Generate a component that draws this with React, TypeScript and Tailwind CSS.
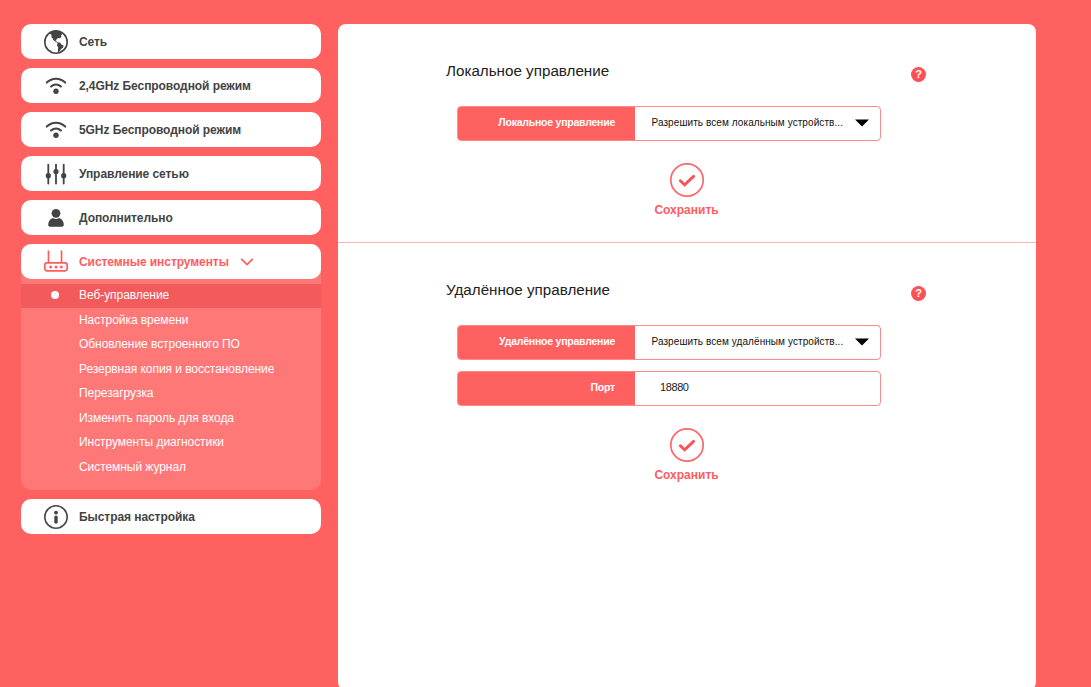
import type { ReactNode } from "react";

function GlobeIcon() {
  return (
    <svg width="26" height="26" viewBox="0 0 26 26" fill="none">
      <circle cx="13" cy="13" r="11.2" stroke="#434343" strokeWidth="1.6" />
      <path
        fill="#434343"
        d="M7.600 2.600 12 1.400l6.600 1.600.4 2.700-1.300 1 .8.9-1.500 1.700-1.900-.2-1.600 1.100-.5 1.500-2.400-.5-.8-1.700-1.300-1.300L8.400 5.700 6.600 4.400z"
      />
      <path d="m10.200 9.800 1.700 2.200 2.800 1.500" stroke="#434343" strokeWidth=".9" />
      <path fill="#434343" d="m14.800 13.200 2.500.5 1.300 2 2.100.9-.8 2.200-1.800 1.100-1.200 2.200-2 1.800.1-4.100.2-1.600-1.300-1.700z" />
    </svg>
  );
}

function WifiIcon() {
  return (
    <svg width="26" height="26" viewBox="0 0 26 26" fill="none" stroke="#434343" strokeWidth="2.1" strokeLinecap="round">
      <path d="M3.800 9.600C9.200 4.500 16.800 4.500 22.200 9.600" />
      <path d="M8.100 13.500c2.900-2.600 6.900-2.600 9.800 0" />
      <circle cx="13" cy="18.300" r="2.700" fill="#434343" stroke="none" />
    </svg>
  );
}

function SlidersIcon() {
  return (
    <svg width="26" height="26" viewBox="0 0 26 26" fill="none" stroke="#434343" strokeWidth="1.8" strokeLinecap="round">
      <path d="M5.300 3.600v19M13 3.600v19M20.700 3.600v19" />
      <g fill="#434343" stroke="none">
        <circle cx="5.300" cy="14.700" r="2.600" />
        <circle cx="13" cy="10.600" r="2.600" />
        <circle cx="20.700" cy="14.700" r="2.600" />
      </g>
    </svg>
  );
}

function UserIcon() {
  return (
    <svg width="26" height="26" viewBox="0 0 26 26" fill="#434343">
      <circle cx="13" cy="8.300" r="4.400" />
      <path d="M5.200 20c0-3.900 2.200-6.200 4.900-6.900 1.800 1.200 4 1.200 5.800 0 2.700.7 4.900 3 4.900 6.900 0 1.200-.9 1.700-2 1.700H7.200c-1.100 0-2-.5-2-1.700z" />
    </svg>
  );
}

function RouterIcon() {
  return (
    <svg width="26" height="26" viewBox="0 0 26 26" fill="none" stroke="#ff5c5e" strokeWidth="1.700">
      <path d="M5.500 1.500v12M18.500 1.500v12" />
      <rect x="1.800" y="13.800" width="22.400" height="8" rx="2.200" />
      <g fill="#ff5c5e" stroke="none">
        <circle cx="7.700" cy="17.900" r="1.500" />
        <circle cx="13" cy="17.900" r="1.500" />
        <circle cx="18.300" cy="17.900" r="1.500" />
      </g>
    </svg>
  );
}

function InfoIcon() {
  return (
    <svg width="26" height="26" viewBox="0 0 26 26" fill="none">
      <circle cx="13" cy="13" r="11.200" stroke="#4a4a4a" strokeWidth="1.600" />
      <circle cx="13" cy="8.700" r="1.900" fill="#434343" />
      <rect x="11.300" y="11.800" width="3.400" height="7.700" rx="1" fill="#434343" />
    </svg>
  );
}

function MenuButton({ icon, active, children }: { icon: ReactNode; active?: boolean; children: ReactNode }) {
  return (
    <div
      className={`flex h-[35px] items-center rounded-[10px] bg-white pl-[22px] text-xs font-bold tracking-[-0.07px] whitespace-nowrap ${
        active ? "text-[#ff5c5e]" : "text-[#434343]"
      }`}
    >
      {icon}
      <span className="ml-2.5 flex items-center">{children}</span>
    </div>
  );
}

const subItems = [
  "Веб-управление",
  "Настройка времени",
  "Обновление встроенного ПО",
  "Резервная копия и восстановление",
  "Перезагрузка",
  "Изменить пароль для входа",
  "Инструменты диагностики",
  "Системный журнал",
];

function Sidebar() {
  return (
    <nav className="flex w-[300px] flex-col gap-[9px]">
      <MenuButton icon={<GlobeIcon />}>Сеть</MenuButton>
      <MenuButton icon={<WifiIcon />}>2,4GHz Беспроводной режим</MenuButton>
      <MenuButton icon={<WifiIcon />}>5GHz Беспроводной режим</MenuButton>
      <MenuButton icon={<SlidersIcon />}>Управление сетью</MenuButton>
      <MenuButton icon={<UserIcon />}>Дополнительно</MenuButton>
      <div className="h-[246px] rounded-[10px] bg-[#ff7878]">
        <MenuButton icon={<RouterIcon />} active>
          Системные инструменты
          <svg className="ml-[11px]" width="14" height="10" viewBox="0 0 14 10" fill="none" stroke="#ff5c5e" strokeWidth="1.700">
            <path d="m1.200 1.800 5.800 5.800 5.800-5.800" />
          </svg>
        </MenuButton>
        <ul className="pt-[4.500px] text-xs tracking-[-0.06px] text-white">
          {subItems.map((text, i) => (
            <li key={text} className={`flex h-[24.5px] items-center pb-px whitespace-nowrap ${i === 0 ? "bg-[#f25a5b]" : ""}`}>
              <span className="flex w-[58px] pl-[30px]">
                {i === 0 && <span className="size-2 rounded-full bg-white" />}
              </span>
              <span>{text}</span>
            </li>
          ))}
        </ul>
      </div>
      <MenuButton icon={<InfoIcon />}>Быстрая настройка</MenuButton>
    </nav>
  );
}

function Field({ label, children }: { label: string; children: ReactNode }) {
  return (
    <div className="ml-[119px] flex h-[35px] w-[424px] overflow-hidden rounded border border-[#ff8a8b] bg-[linear-gradient(90deg,#ff6060_177px,#fff_177px)]">
      <div className="flex w-[177px] items-center justify-end pr-5 pb-0.5 text-[10.500px] font-bold tracking-[-0.23px] text-white">
        {label}
      </div>
      <div className="flex flex-1 items-center pb-0.5">{children}</div>
    </div>
  );
}

function SelectValue({ children }: { children: ReactNode }) {
  return (
    <>
      <span className="ml-[16.500px] w-[203.500px] text-[10px] tracking-[0.08px] whitespace-nowrap text-[#111]">{children}</span>
      <svg className="mt-px" width="14" height="8" viewBox="0 0 14 8">
        <path d="M0 .5h14L7 7.500z" fill="#000" />
      </svg>
    </>
  );
}

function Heading({ children }: { children: ReactNode }) {
  return (
    <div className="mr-[110px] ml-[108px] flex h-6 items-center justify-between">
      <h2 className="text-[15.200px] text-[#222]">{children}</h2>
      <span className="mt-1.5 flex size-[15px] items-center justify-center rounded-full bg-[#ff5054] text-[11px] leading-none font-bold text-white">
        ?
      </span>
    </div>
  );
}

function SaveButton() {
  return (
    <button className="ml-[316.500px] flex w-16 flex-col items-center text-xs font-bold text-[#ff5c5e]">
      <svg width="36" height="36" viewBox="0 0 36 36" fill="none">
        <circle cx="18" cy="18" r="16.200" stroke="#ff6668" strokeWidth="1.700" />
        <path d="m11.300 18.800 4.300 4 9-8.400" stroke="#ff5054" strokeWidth="2.900" strokeLinecap="round" />
      </svg>
      <span className="mt-1">Сохранить</span>
    </button>
  );
}

export default function App() {
  return (
    <div className="flex h-[687px] w-[1091px] items-start overflow-hidden bg-[#ff6060] font-['Liberation_Sans',Arial,sans-serif]">
      <div className="pt-6 pl-[21px]">
        <Sidebar />
      </div>
      <main className="mt-6 ml-[17px] h-[666px] w-[698px] shrink-0 rounded-lg bg-white">
        <section className="h-[219px] border-b border-[#ffb4b4] pt-[35px]">
          <Heading>Локальное управление</Heading>
          <div className="pt-[23px] pb-[21px]">
            <Field label="Локальное управление">
              <SelectValue>Разрешить всем локальным устройств...</SelectValue>
            </Field>
          </div>
          <SaveButton />
        </section>
        <section className="pt-[35px]">
          <Heading>Удалённое управление</Heading>
          <div className="flex flex-col gap-[11px] pt-[23px] pb-[21px]">
            <Field label="Удалённое управление">
              <SelectValue>Разрешить всем удалённым устройств...</SelectValue>
            </Field>
            <Field label="Порт">
              <span className="ml-[25px] text-[11px] tracking-[-0.4px] text-[#222]">18880</span>
            </Field>
          </div>
          <SaveButton />
        </section>
      </main>
    </div>
  );
}
